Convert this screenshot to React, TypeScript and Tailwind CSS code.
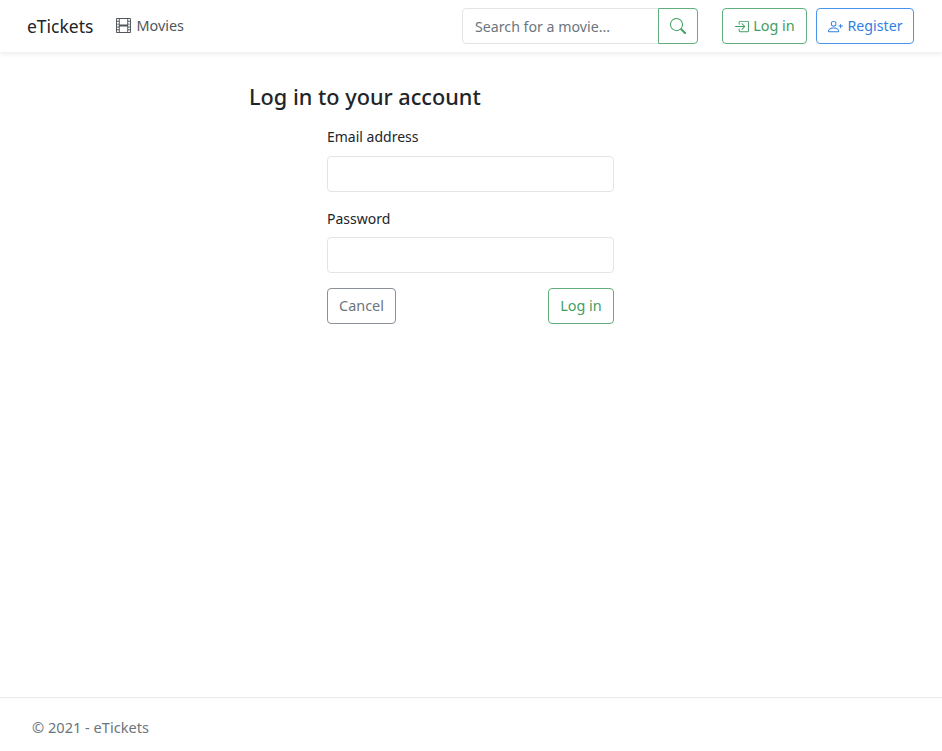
const font = "font-['Noto_Sans',sans-serif]";

function FilmIcon() {
  return (
    <svg width="15" height="15" viewBox="0 0 16 16" fill="currentColor">
      <path d="M0 1a1 1 0 0 1 1-1h14a1 1 0 0 1 1 1v14a1 1 0 0 1-1 1H1a1 1 0 0 1-1-1V1zm4 0v6h8V1H4zm8 8H4v6h8V9zM1 1v2h2V1H1zm2 3H1v2h2V4zM1 7v2h2V7H1zm2 3H1v2h2v-2zm-2 3v2h2v-2H1zM15 1h-2v2h2V1zm-2 3v2h2V4h-2zm2 3h-2v2h2V7zm-2 3v2h2v-2h-2zm2 3h-2v2h2v-2z" />
    </svg>
  );
}

function SearchIcon() {
  return (
    <svg width="16" height="16" viewBox="0 0 16 16" fill="currentColor">
      <path d="M11.742 10.344a6.5 6.5 0 1 0-1.397 1.398h-.001c.03.04.062.078.098.115l3.85 3.85a1 1 0 0 0 1.415-1.414l-3.85-3.85a1.007 1.007 0 0 0-.115-.1zM12 6.5a5.5 5.5 0 1 1-11 0 5.5 5.5 0 0 1 11 0z" />
    </svg>
  );
}

function LoginIcon() {
  return (
    <svg width="15" height="15" viewBox="0 0 16 16" fill="currentColor">
      <path d="M6 3.5a.5.5 0 0 1 .5-.5h8a.5.5 0 0 1 .5.5v9a.5.5 0 0 1-.5.5h-8a.5.5 0 0 1-.5-.5v-2a.5.5 0 0 0-1 0v2A1.5 1.5 0 0 0 6.5 14h8a1.5 1.5 0 0 0 1.5-1.5v-9A1.5 1.5 0 0 0 14.5 2h-8A1.5 1.5 0 0 0 5 3.5v2a.5.5 0 0 0 1 0v-2z" />
      <path d="M11.854 8.354a.5.5 0 0 0 0-.708l-3-3a.5.5 0 1 0-.708.708L10.293 7.5H1.5a.5.5 0 0 0 0 1h8.793l-2.147 2.146a.5.5 0 0 0 .708.708l3-3z" />
    </svg>
  );
}

function PersonPlusIcon() {
  return (
    <svg width="15" height="15" viewBox="0 0 16 16" fill="currentColor">
      <path d="M6 8a3 3 0 1 0 0-6 3 3 0 0 0 0 6zm2-3a2 2 0 1 1-4 0 2 2 0 0 1 4 0zm4 8c0 1-1 1-1 1H1s-1 0-1-1 1-4 6-4 6 3 6 4zm-1-.004c-.001-.246-.154-.986-.832-1.664C9.516 10.68 8.289 10 6 10c-2.29 0-3.516.68-4.168 1.332-.678.678-.83 1.418-.832 1.664h10z" />
      <path d="M13.5 5a.5.5 0 0 1 .5.5V7h1.5a.5.5 0 0 1 0 1H14v1.5a.5.5 0 0 1-1 0V8h-1.5a.5.5 0 0 1 0-1H13V5.5a.5.5 0 0 1 .5-.5z" />
    </svg>
  );
}

export default function App() {
  return (
    <div className={`${font} flex min-h-[751px] flex-col bg-white text-[14.4px] text-[#212529]`}>
      <nav className="flex h-[52px] items-center pl-[27px] pr-[28px] shadow-[0_2px_5px_rgba(0,0,0,0.08)]">
        <span className="text-[17.5px] text-[#212529]">eTickets</span>
        <a className="ml-[23px] flex items-center gap-[5px] text-[#50565c]">
          <FilmIcon />
          Movies
        </a>
        <div className="ml-auto flex">
          <input
            placeholder="Search for a movie..."
            className="h-9 w-[197px] rounded-l border border-[#e2e5e8] px-3 text-[14.2px] outline-none placeholder:text-[#6c757d]"
          />
          <button className="-ml-px flex h-9 w-10 items-center justify-center rounded-r border border-[#5fb07c] text-[#3f9e63]">
            <SearchIcon />
          </button>
        </div>
        <button className="ml-6 flex h-9 w-[85px] items-center justify-center gap-1 rounded border border-[#5fb07c] text-[#3f9e63]">
          <LoginIcon />
          Log in
        </button>
        <button className="ml-[9px] flex h-9 w-[98px] items-center justify-center gap-[5px] rounded border border-[#4a95ec] text-[#2f80e4] text-[14.2px]">
          <PersonPlusIcon />
          Register
        </button>
      </nav>

      <main className="flex-1 pl-[249px] pt-[28px]">
        <h1 className="text-[21.7px] leading-[34px] font-medium text-[#212529]">Log in to your account</h1>
        <form className="ml-[78px] mt-[11px] w-[287px]">
          <label className="block text-[14px] leading-6">Email address</label>
          <input type="email" className="mt-[7px] block h-9 w-full rounded border border-[#e2e5e8] px-3 outline-none" />
          <label className="mt-[15px] block text-[14px] leading-6">Password</label>
          <input type="password" className="mt-[6px] block h-9 w-full rounded border border-[#e2e5e8] px-3 outline-none" />
          <div className="mt-[15px] flex justify-between">
            <button type="button" className="h-9 w-[69px] rounded border border-[#8a9198] text-[#6c757d]">
              Cancel
            </button>
            <button type="button" className="h-9 w-[66px] rounded border border-[#5fb07c] text-[#3f9e63]">
              Log in
            </button>
          </div>
        </form>
      </main>

      <footer className="h-[54px] border-t border-[#e9ecef] pl-[32px] pt-[17px] text-[14.6px] leading-6 text-[#6c757d]">
        © 2021 - eTickets
      </footer>
    </div>
  );
}
